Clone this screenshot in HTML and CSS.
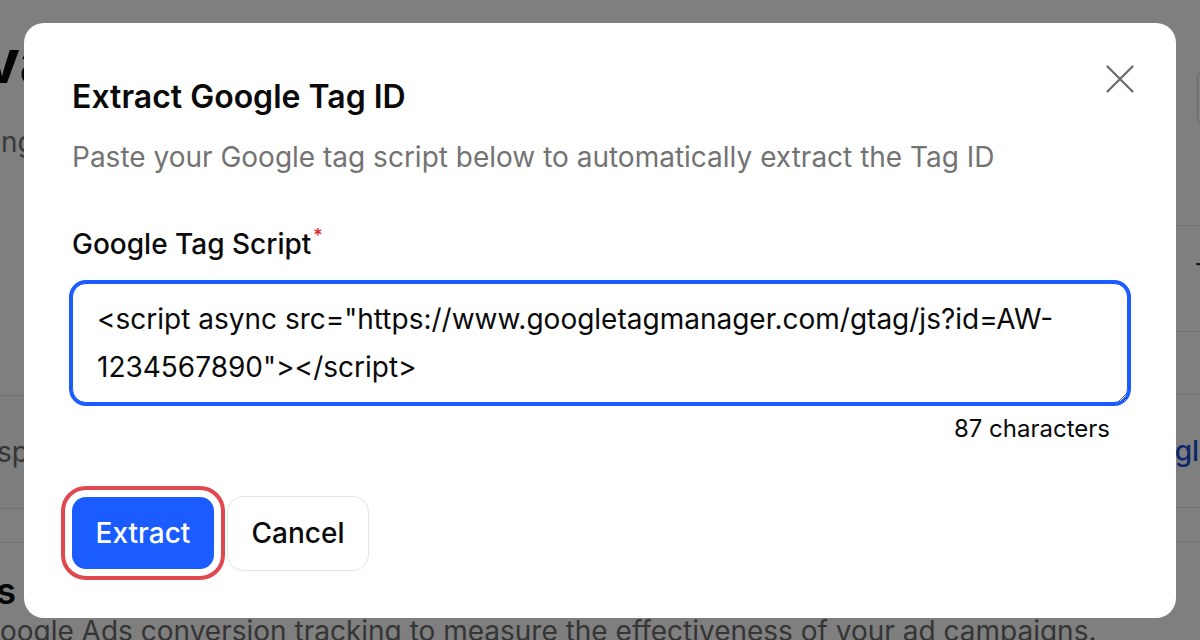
FILE: index.html
```html
<!DOCTYPE html>
<html lang="en">
<head>
    <meta charset="UTF-8">
    <meta name="viewport" content="width=device-width, initial-scale=1.0">
    <title>Extract Google Tag ID</title>
    <link rel="stylesheet" href="styles.css">
</head>
<body>
    <!-- page behind the dialog -->
    <div class="page">
        <div class="page-main">
            <h1 class="page-title">Privacy</h1>
            <p class="page-sub">Tracking settings</p>
            <div class="rows">
                <div class="row row-tall">
                    <span class="row-text">Display name</span>
                </div>
                <div class="row row-short"></div>
            </div>
            <h2 class="section-title"><span>Google Ads</span></h2>
            <p class="section-desc">Google Ads conversion tracking to measure the effectiveness of your ad campaigns.</p>
        </div>
        <div class="page-side">
            <div class="side-btn"></div>
            <div class="side-row side-row-a"><span class="side-icon">T</span></div>
            <div class="side-row side-row-b"></div>
            <div class="side-row side-row-c"><a class="side-link">Google</a></div>
            <div class="side-row side-row-d"></div>
        </div>
    </div>

    <div class="overlay">
        <div class="modal" role="dialog" aria-labelledby="modalTitle">
            <button class="modal-close" aria-label="Close">
                <svg width="28" height="28" viewBox="0 0 28 28" fill="none" stroke="currentColor" stroke-width="2.2" stroke-linecap="round">
                    <path d="M1.5 1.5 L26.5 26.5 M26.5 1.5 L1.5 26.5"/>
                </svg>
            </button>
            <h2 class="modal-title" id="modalTitle">Extract Google Tag ID</h2>
            <p class="modal-desc">Paste your Google tag script below to automatically extract the Tag ID</p>

            <label class="field-label" for="tagScript">Google Tag Script<span class="req">*</span></label>
            <textarea class="field-input" id="tagScript" rows="2">&lt;script async src="https://www.googletagmanager.com/gtag/js?id=AW-1234567890"&gt;&lt;/script&gt;</textarea>
            <div class="field-count">87 characters</div>

            <div class="modal-actions">
                <button class="btn btn-primary">Extract</button>
                <button class="btn btn-secondary">Cancel</button>
            </div>
        </div>
    </div>
</body>
</html>
```

FILE: styles.css
```css
body {
    margin: 0;
    font-family: Inter, "Noto Sans", sans-serif;
    background-color: #fff;
    color: #0a0a0a;
}

/* background page */
.page {
    display: flex;
    justify-content: space-between;
    height: 640px;
    overflow: hidden;
}
.page-main {
    flex: 1;
}
.page-title {
    margin: 31px 0 0 -96px;
    font-size: 60px;
    line-height: 60px;
    font-weight: 700;
    white-space: nowrap;
}
.page-sub {
    margin: 33px 0 0 -80px;
    font-size: 28px;
    line-height: 36px;
    color: #737373;
    white-space: nowrap;
}
.rows {
    margin-top: 235px;
    width: 200px;
}
.row {
    border-top: 1px solid #e5e5e5;
}
.row-tall {
    height: 112px;
    display: flex;
    align-items: center;
    background-color: #fafafa;
}
.row-short {
    height: 33px;
    border-bottom: 1px solid #e5e5e5;
}
.row-text {
    margin-left: -30px;
    font-size: 28px;
    color: #6b6b6b;
    white-space: nowrap;
}
.section-title {
    display: flex;
    justify-content: flex-end;
    width: 16px;
    margin: 26px 0 0;
    font-size: 36px;
    line-height: 44px;
    font-weight: 600;
    white-space: nowrap;
}
.section-desc {
    margin: 0 0 0 -21px;
    font-size: 28px;
    line-height: 36px;
    color: #6b6b6b;
    white-space: nowrap;
}
.page-side {
    width: 40px;
    padding-top: 67px;
}
.side-btn {
    width: 120px;
    height: 60px;
    margin-left: 37px;
    border: 1px solid #d4d4d4;
    border-radius: 12px;
}
.side-row {
    border-top: 1px solid #e5e5e5;
}
.side-row-a {
    margin-top: 96px;
    height: 105px;
    display: flex;
    align-items: center;
}
.side-row-b {
    height: 62px;
}
.side-row-c {
    height: 112px;
    display: flex;
    align-items: center;
}
.side-row-d {
    height: 33px;
    border-bottom: 1px solid #e5e5e5;
}
.side-icon {
    margin: -12px 0 0 35px;
    font-size: 26px;
    color: #333;
}
.side-link {
    margin-left: -40px;
    font-size: 28px;
    font-weight: 500;
    color: #1d4ed8;
    white-space: nowrap;
}

/* dialog */
.overlay {
    position: fixed;
    inset: 0;
    display: flex;
    align-items: center;
    justify-content: center;
    background-color: rgba(0, 0, 0, 0.5);
}
.modal {
    position: relative;
    box-sizing: border-box;
    width: 1152px;
    padding: 54px 48px 47px 48px;
    background-color: #fff;
    border-radius: 20px;
    display: flex;
    flex-direction: column;
}
.modal-close {
    position: absolute;
    top: 42px;
    right: 42px;
    padding: 0;
    border: none;
    background: none;
    color: #6b6b6b;
    line-height: 0;
}
.modal-title {
    margin: 0;
    font-size: 32px;
    line-height: 40px;
    font-weight: 600;
}
.modal-desc {
    margin: 20px 0 0;
    font-size: 28px;
    line-height: 40px;
    color: #737373;
}
.field-label {
    margin-top: 47px;
    font-size: 28px;
    line-height: 40px;
    font-weight: 500;
}
.req {
    position: relative;
    top: -12px;
    margin-left: 2px;
    font-size: 18px;
    color: #e11d2a;
}
.field-input {
    box-sizing: border-box;
    margin-top: 15px;
    height: 120px;
    padding: 11px 24px;
    border: 1px solid #1a5cff;
    border-radius: 14px;
    box-shadow: 0 0 0 3px #1a5cff;
    outline: none;
    font-family: inherit;
    font-size: 28px;
    line-height: 48px;
    color: #0a0a0a;
}
.field-count {
    margin-top: 10px;
    padding-right: 18px;
    text-align: right;
    font-size: 24px;
    line-height: 32px;
    color: #0a0a0a;
}
.modal-actions {
    display: flex;
    align-items: center;
    gap: 13px;
    margin-top: 51px;
}
.btn {
    width: 142px;
    border-radius: 14px;
    font-family: inherit;
    font-size: 28px;
    font-weight: 500;
    cursor: pointer;
}
.btn-primary {
    height: 72px;
    border: none;
    background-color: #1a5cff;
    color: #fff;
    outline: 4px solid #e0474f;
    outline-offset: 7px;
}
.btn-secondary {
    height: 75px;
    border: 1px solid #e5e5e5;
    border-radius: 16px;
    background-color: #fff;
    color: #0a0a0a;
}
```
